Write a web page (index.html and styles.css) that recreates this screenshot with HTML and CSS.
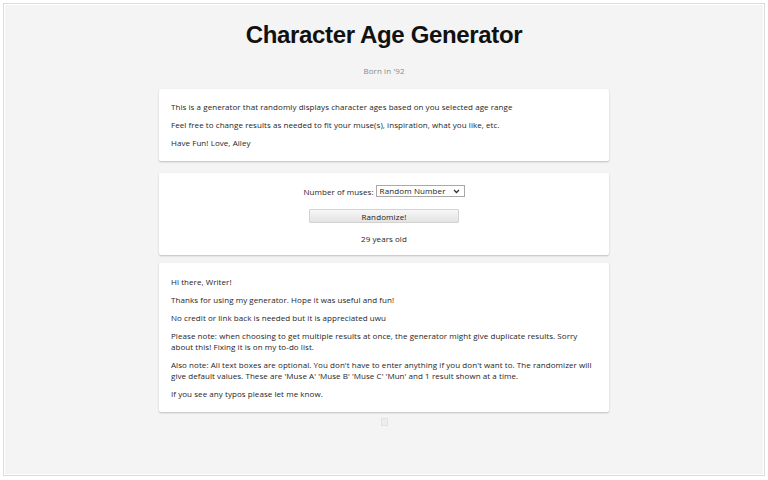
FILE: index.html
```html
<!DOCTYPE html>
<html>
<head>
<meta charset="utf-8">
<title>Character Age Generator</title>
<link rel="stylesheet" href="styles.css">
</head>
<body>
<div class="frame">
  <h1 class="title">Character Age Generator</h1>
  <div class="subtitle">Born in '92</div>

  <div class="card intro">
    <p>This is a generator that randomly displays character ages based on you selected age range</p>
    <p>Feel free to change results as needed to fit your muse(s), inspiration, what you like, etc.</p>
    <p>Have Fun! Love, Alley</p>
  </div>

  <div class="card form">
    <div class="row">
      <label class="label" for="muses">Number of muses:</label>
      <span class="select-wrap">
        <select id="muses" class="select">
          <option>Random Number</option>
          <option>1</option>
          <option>2</option>
          <option>3</option>
        </select>
        <svg class="chevron" width="7" height="5" viewBox="0 0 7 5" aria-hidden="true"><path d="M1 1 L3.5 3.5 L6 1" fill="none" stroke="#333" stroke-width="1.3"/></svg>
      </span>
    </div>
    <button class="button" type="button">Randomize!</button>
    <div class="result">29 years old</div>
  </div>

  <div class="card notes">
    <p>Hi there, Writer!</p>
    <p>Thanks for using my generator. Hope it was useful and fun!</p>
    <p>No credit or link back is needed but it is appreciated uwu</p>
    <p>Please note: when choosing to get multiple results at once, the generator might give duplicate results. Sorry about this! Fixing it is on my to-do list.</p>
    <p>Also note: All text boxes are optional. You don't have to enter anything if you don't want to. The randomizer will give default values. These are 'Muse A' 'Muse B' 'Muse C' 'Mun' and 1 result shown at a time.</p>
    <p>If you see any typos please let me know.</p>
  </div>

  <div class="counter"></div>
</div>
</body>
</html>
```

FILE: styles.css
```css
html, body {
  margin: 0;
  padding: 0;
  background: #ffffff;
}

body {
  font-family: "Open Sans", "Liberation Sans", Arial, sans-serif;
  color: #1e1e1e;
}

.frame {
  margin: 3px;
  border: 1px solid #dcdcdc;
  box-shadow: inset 0 0 0 1px #ffffff;
  background: #f4f4f4;
  height: 473px;
  box-sizing: border-box;
  padding-top: 17px;
  display: flex;
  flex-direction: column;
  align-items: center;
}

.title {
  margin: 0;
  font-family: "Liberation Sans", Arial, sans-serif;
  font-size: 24px;
  line-height: 28px;
  font-weight: 700;
  letter-spacing: -0.35px;
  color: #111111;
}

.subtitle {
  margin-top: 16px;
  font-size: 8px;
  line-height: 12px;
  letter-spacing: 0.1px;
  color: #8a8a8a;
}

.card {
  width: 450px;
  box-sizing: border-box;
  background: #ffffff;
  border-radius: 2px;
  box-shadow: 0 1px 2px rgba(0, 0, 0, 0.22);
  font-size: 8px;
  line-height: 11px;
  letter-spacing: 0.06px;
}

.card p {
  margin: 0 0 7px 0;
}

.card p:last-child {
  margin-bottom: 0;
}

.intro {
  margin-top: 12px;
  padding: 12px 12px 13px 12px;
}

.form {
  margin-top: 12px;
  padding: 12px 12px 10px 12px;
  display: flex;
  flex-direction: column;
  align-items: center;
}

.row {
  display: flex;
  align-items: center;
  gap: 2px;
  height: 12px;
}

.label {
  font-size: 8px;
}

.select-wrap {
  position: relative;
  display: block;
  width: 89px;
  height: 12px;
}

.select {
  appearance: none;
  -webkit-appearance: none;
  display: block;
  width: 89px;
  height: 12px;
  box-sizing: border-box;
  font-family: "Open Sans", "Liberation Sans", Arial, sans-serif;
  font-size: 8px;
  line-height: 10px;
  letter-spacing: 0.12px;
  padding: 0 0 0 3px;
  border: 1px solid #a9a9a9;
  border-radius: 0;
  background: #ffffff;
  color: #222222;
}

.chevron {
  position: absolute;
  right: 5px;
  top: 4px;
  pointer-events: none;
}

.button {
  margin-top: 12px;
  width: 150px;
  height: 14px;
  padding: 0;
  font-family: "Open Sans", "Liberation Sans", Arial, sans-serif;
  font-size: 8px;
  letter-spacing: 0.12px;
  color: #222222;
  border: 1px solid #d2d2d2;
  border-radius: 1px;
  background: linear-gradient(#f7f7f7, #e3e3e3);
}

.result {
  margin-top: 10px;
  line-height: 12px;
}

.notes {
  margin-top: 8px;
  padding: 13px 12px 13px 12px;
}

.counter {
  margin-top: 6px;
  width: 5px;
  height: 6px;
  border: 1px solid #e2e2e2;
  background: #eeeeee;
}
```
